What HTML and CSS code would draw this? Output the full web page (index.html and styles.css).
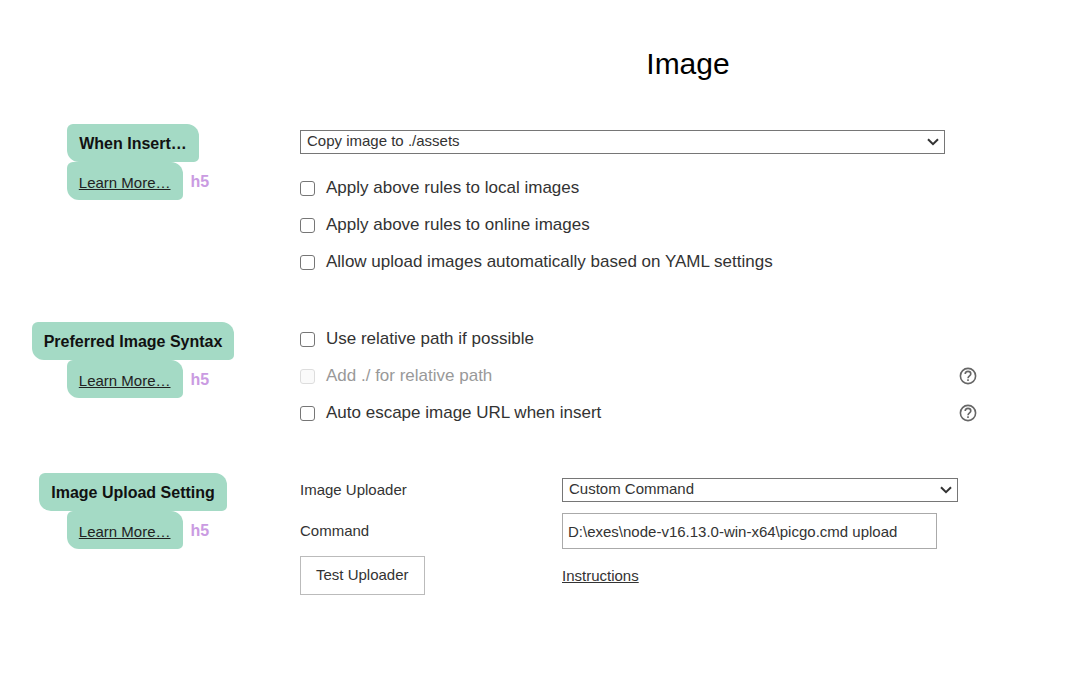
FILE: index.html
```html
<!DOCTYPE html>
<html lang="en">
<head>
<meta charset="utf-8">
<title>Image</title>
<link rel="stylesheet" href="styles.css">
</head>
<body>
<main class="page">
  <h1 class="title">Image</h1>

  <section class="group">
    <div class="side">
      <h2 class="tag">When Insert…</h2>
      <div class="more"><a class="tag-link" href="#insert">Learn More…</a><span class="level">h5</span></div>
    </div>
    <div class="options">
      <div class="picker picker-wide">
        <select class="select" aria-label="When Insert"><option>Copy image to ./assets</option></select>
        <svg class="chevron" viewBox="0 0 12 8" aria-hidden="true"><path d="M1 1.2L6 6.2L11 1.2"/></svg>
      </div>
      <div class="checks">
        <label class="check"><input type="checkbox">Apply above rules to local images</label>
        <label class="check"><input type="checkbox">Apply above rules to online images</label>
        <label class="check"><input type="checkbox">Allow upload images automatically based on YAML settings</label>
      </div>
    </div>
  </section>

  <section class="group">
    <div class="side">
      <h2 class="tag">Preferred Image Syntax</h2>
      <div class="more"><a class="tag-link" href="#syntax">Learn More…</a><span class="level">h5</span></div>
    </div>
    <div class="options">
      <div class="checks">
        <label class="check"><input type="checkbox">Use relative path if possible</label>
        <div class="check-row">
          <label class="check check-off"><input type="checkbox" disabled>Add ./ for relative path</label>
          <button class="help" type="button" aria-label="Help"><svg viewBox="0 0 18 18" aria-hidden="true"><circle cx="9" cy="9" r="7.6"/><path d="M6.2 7.1C6.2 5.4 7.4 4.4 9 4.4C10.6 4.4 11.8 5.5 11.8 6.9C11.8 8.8 9 8.9 9 11.2M9 12.3V14"/></svg></button>
        </div>
        <div class="check-row">
          <label class="check"><input type="checkbox">Auto escape image URL when insert</label>
          <button class="help" type="button" aria-label="Help"><svg viewBox="0 0 18 18" aria-hidden="true"><circle cx="9" cy="9" r="7.6"/><path d="M6.2 7.1C6.2 5.4 7.4 4.4 9 4.4C10.6 4.4 11.8 5.5 11.8 6.9C11.8 8.8 9 8.9 9 11.2M9 12.3V14"/></svg></button>
        </div>
      </div>
    </div>
  </section>

  <section class="group">
    <div class="side">
      <h2 class="tag">Image Upload Setting</h2>
      <div class="more"><a class="tag-link" href="#upload">Learn More…</a><span class="level">h5</span></div>
    </div>
    <div class="options uploader">
      <label for="uploader">Image Uploader</label>
      <div class="picker">
        <select class="select" id="uploader"><option>Custom Command</option></select>
        <svg class="chevron" viewBox="0 0 12 8" aria-hidden="true"><path d="M1 1.2L6 6.2L11 1.2"/></svg>
      </div>
      <label class="command-label" for="command">Command</label>
      <input class="command" id="command" type="text" value="D:\exes\node-v16.13.0-win-x64\picgo.cmd upload">
      <button class="test" type="button">Test Uploader</button>
      <a class="instructions" href="#instructions">Instructions</a>
    </div>
  </section>
</main>
</body>
</html>
```
FILE: styles.css
```css
* {
  box-sizing: border-box;
}

body {
  margin: 0;
  background: #fff;
  color: #333;
  font: 16px/20px "Liberation Sans", Arial, sans-serif;
}

.page {
  padding: 44px 0 40px;
}

.title {
  margin: 0 0 40px;
  padding-left: 305px;
  color: #000;
  font-size: 30px;
  font-weight: 400;
  line-height: 40px;
  text-align: center;
}

.group {
  display: grid;
  grid-template-columns: 266px minmax(0, 1fr);
  column-gap: 34px;
}

.group + .group {
  margin-top: 40px;
}

.side {
  display: flex;
  flex-direction: column;
  align-items: center;
}

.tag,
.tag-link {
  padding: 10px 12px 8px;
  border-radius: 6px 12px 5px 12px;
  background: #a4dac5;
}

.tag {
  margin: 0;
  color: #111;
  font-size: 16px;
  line-height: 20px;
}

.more {
  display: flex;
  align-items: center;
  gap: 8px;
  padding-left: 10px;
}

.tag-link {
  padding: 11px 12px 7px;
  color: #222;
  font-size: 15px;
  line-height: 20px;
}

.level {
  padding-top: 2px;
  color: #ca9be2;
  font-weight: 700;
}

.options {
  padding-top: 5px;
  padding-right: 94px;
}

.picker {
  display: grid;
  align-items: center;
}

.picker-wide {
  margin: 1px 32px 22px 0;
}

.select {
  grid-area: 1 / 1;
  height: 24px;
  padding: 0 24px 2px 6px;
  border: 1px solid #767676;
  border-radius: 0;
  background: #fff;
  color: #333;
  font: inherit;
  font-size: 15px;
  appearance: none;
}

.chevron {
  grid-area: 1 / 1;
  justify-self: end;
  width: 12px;
  height: 8px;
  margin-right: 6px;
  fill: none;
  stroke: #333;
  stroke-width: 2;
  pointer-events: none;
}

.checks {
  display: grid;
  gap: 13px;
  padding-bottom: 8px;
}

.check {
  display: flex;
  align-items: center;
  gap: 11px;
  font-size: 17px;
  line-height: 24px;
}

.check input {
  appearance: none;
  width: 15px;
  height: 15px;
  margin: 0;
  border: 1px solid #767676;
  border-radius: 3px;
  background: #fff;
}

.check-off {
  color: #999;
}

.check-off input {
  border-color: #ddd;
  background: #fafafa;
}

.check-row {
  display: flex;
  align-items: center;
  justify-content: space-between;
}

.help {
  display: block;
  width: 18px;
  height: 18px;
  padding: 0;
  border: 0;
  background: none;
}

.help svg {
  display: block;
  fill: none;
  stroke: #666;
  stroke-width: 1.6;
}

.uploader {
  display: grid;
  grid-template-columns: 262px minmax(0, 1fr);
  grid-template-rows: 24px 40px 39px;
  row-gap: 7px;
  align-items: center;
  padding-right: 113px;
  font-size: 15px;
}

.command-label {
  align-self: end;
  line-height: 36px;
}

.command {
  align-self: end;
  height: 36px;
  margin-right: 21px;
  padding: 0 5px;
  border: 1px solid #aaa;
  background: #fff;
  color: #333;
  font: inherit;
}

.test {
  justify-self: start;
  height: 39px;
  padding: 0 15px 2px;
  border: 1px solid #bbb;
  background: #fff;
  color: #333;
  font: inherit;
}

.instructions {
  justify-self: start;
  color: #333;
}
```
